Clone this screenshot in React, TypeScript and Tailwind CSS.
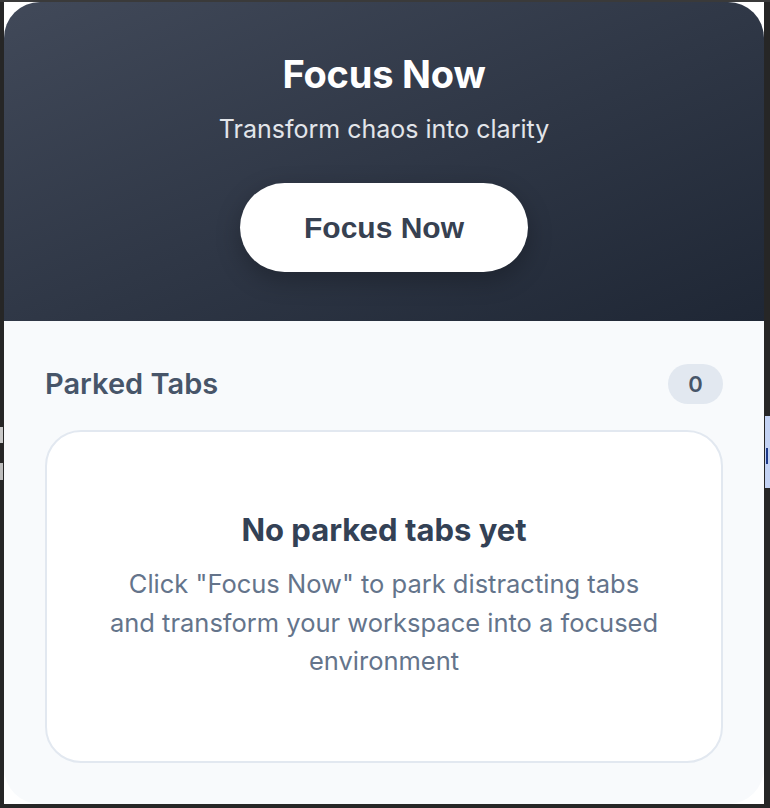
import React from "react";

export default function App() {
  return (
    <div
      className="relative w-[770px] h-[808px] bg-[#262626] pl-[4px] pt-[2px] pr-[6px] pb-[4px]"
      style={{ fontFamily: "Inter, 'Noto Sans', sans-serif" }}
    >
      {/* background page artifacts at edges */}
      <div className="absolute left-0 top-[427px] w-[3px] h-[16px] bg-[#c8c8c8]" />
      <div className="absolute left-0 top-[463px] w-[3px] h-[17px] bg-[#bdbdbd]" />
      <div className="absolute right-0 top-[416px] w-[5px] h-[72px] bg-[#c3d2f3]">
        <div className="absolute left-[1px] top-[32px] w-[2px] h-[16px] bg-[#1e3a8a]" />
      </div>
      <div className="absolute left-0 top-[0px] w-full h-[2px] bg-[#3a3a3a]" />

      <div className="w-full h-full bg-white">
        <div className="w-full h-full rounded-[36px] overflow-hidden flex flex-col bg-[#f8fafc]">
          {/* Header */}
          <div className="bg-gradient-to-br from-[#414959] to-[#1f2735] flex flex-col items-center pt-[50px] pb-[49px]">
            <h1 className="text-[38px] leading-[44px] font-bold text-white tracking-[-0.2px]">Focus Now</h1>
            <p className="mt-[19px] text-[25px] leading-[28px] text-[#e2e5ea]">Transform chaos into clarity</p>
            <button
              className="mt-[40px] w-[288px] h-[89px] rounded-full bg-white text-[30px] font-bold text-[#374151] shadow-[0_8px_24px_rgba(0,0,0,0.25)]"
              style={{ fontFamily: "'Liberation Sans', Arial, sans-serif" }}
            >
              Focus Now
            </button>
          </div>

          {/* Parked section */}
          <div className="flex-1 px-[41px] pt-[43px]">
            <div className="flex items-center justify-between h-[40px]">
              <h2 className="text-[29px] font-semibold text-[#475569]">Parked Tabs</h2>
              <span className="w-[55px] h-[40px] rounded-full bg-[#e2e8f0] flex items-center justify-center text-[22px] font-semibold text-[#475569]">
                0
              </span>
            </div>
            <div className="mt-[26px] h-[333px] bg-white border-2 border-[#e2e8f0] rounded-[36px] flex flex-col items-center justify-center">
              <h3 className="text-[31px] leading-[36px] font-bold text-[#334155]">No parked tabs yet</h3>
              <p className="mt-[17px] max-w-[556px] text-center text-[25.5px] leading-[38.5px] text-[#64748b]">
                Click "Focus Now" to park distracting tabs and transform your workspace into a focused environment
              </p>
            </div>
          </div>
        </div>
      </div>
    </div>
  );
}
